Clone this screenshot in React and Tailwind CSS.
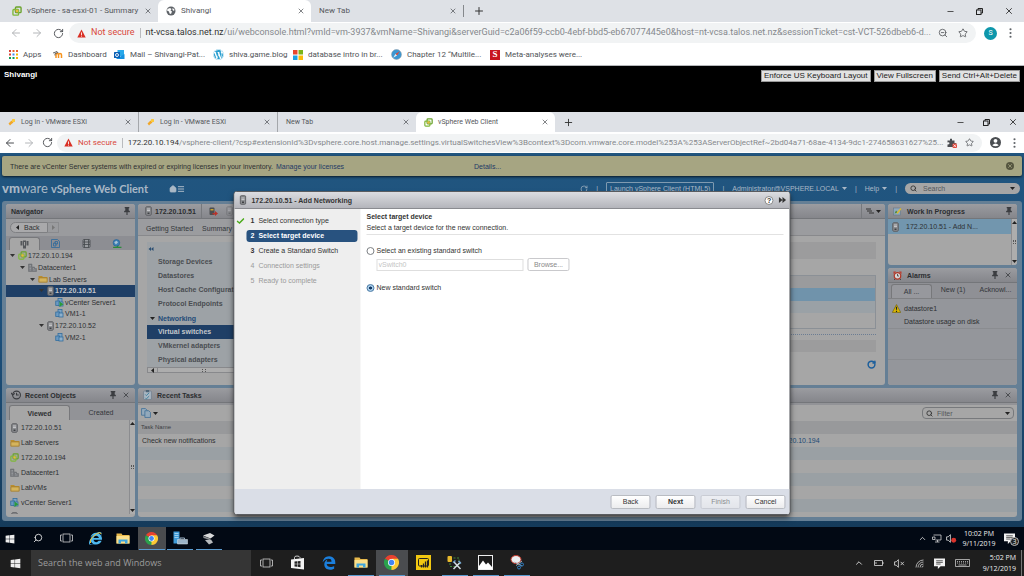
import { FaWindows, FaWordpress, FaEdgeLegacy, FaInternetExplorer } from "react-icons/fa6";
import {
  ArrowLeft,
  ArrowRight,
  ChevronUp,
  House,
  Menu,
  Minus,
  Plus,
  RotateCw,
  Search,
  Star,
  X,
  ZoomOut,
} from "lucide-react";

const chromeFont = "font-['Roboto','Segoe_UI',sans-serif]";
const taskbarFont = "font-['Open_Sans','Segoe_UI',sans-serif]";
const clientFont = "font-['Liberation_Sans',Arial,sans-serif]";

/* ---------- icons ---------- */

const VSphereIcon = ({ className = "size-[9px]" }) => (
  <svg viewBox="0 0 16 16" className={className} fill="none">
    <rect x="5.5" y="1.5" width="9" height="9" rx="1.5" stroke="#6aa22c" strokeWidth="2.2" />
    <rect x="1.5" y="5.5" width="9" height="9" rx="1.5" stroke="#7fb83a" strokeWidth="2.2" />
    <rect x="6" y="6" width="4" height="4" fill="#e9b93a" />
  </svg>
);

const HostIcon = ({ className = "h-[10px] w-[7px]" }) => (
  <svg viewBox="0 0 14 20" className={className}>
    <rect x="1.5" y="1.5" width="11" height="17" rx="2" fill="#8d8f92" stroke="#5c5e62" strokeWidth="2" />
    <path d="M4 6h6M4 9h6" stroke="#d5d6d8" strokeWidth="1.5" />
    <rect x="5" y="13" width="4" height="3" fill="#3f4144" />
  </svg>
);

const FolderIcon = ({ className = "h-[8px] w-[10px]" }) => (
  <svg viewBox="0 0 20 16" className={className}>
    <path d="M1 2h7l2 2h9v11H1z" fill="#b98d2f" />
    <path d="M2 6h16v8H2z" fill="#d5b45c" stroke="#94702a" />
  </svg>
);

const DatacenterIcon = ({ className = "size-[9px]" }) => (
  <svg viewBox="0 0 18 18" className={className}>
    <path d="M1 17V2h7v6h5v3h4v6z" fill="#77797d" stroke="#66686c" />
    <path d="M3 5h3M3 8h3M3 11h3M10 11h2M10 14h5M3 14h3" stroke="#b3b5b8" />
  </svg>
);

const VmIcon = ({ running }) => (
  <svg viewBox="0 0 18 18" className="size-[9px] shrink-0">
    <rect x="6" y="1" width="8" height="8" fill="#7ea4c4" stroke="#2d6a9c" strokeWidth="1.5" />
    <rect x="1.5" y="6" width="8" height="9" fill="#6b9ac2" stroke="#2d6a9c" strokeWidth="1.5" />
    <rect x="8" y="8" width="8" height="8" fill="#8fb0cb" stroke="#2d6a9c" strokeWidth="1.5" />
    {running && <path d="M9 7l8 5.500-8 5.500z" fill="#2b9a3b" />}
  </svg>
);

const PinIcon = () => (
  <svg viewBox="0 0 10 14" className="h-[8px] w-[6px]" fill="#3b3d41">
    <path d="M1 0h8v2H8v4l2 1v2H6v5H4V9H0V7l2-1V2H1z" />
  </svg>
);

const KeyIcon = () => (
  <svg viewBox="0 0 16 16" className="size-2">
    <path d="M1 11l6-6 4 4-4 3-3 3z" fill="#f0a629" />
    <rect x="8" y="2" width="6" height="6" rx="1" fill="#fbc93c" />
  </svg>
);

const WarningIcon = ({ className = "size-[9px]" }) => (
  <svg viewBox="0 0 16 16" className={className}>
    <path d="M8 1l7.5 14H.5z" fill="#d93025" />
    <path d="M8 6v5M8 12v1.5" stroke="#fff" strokeWidth="1.5" />
  </svg>
);

const ChromeIcon = ({ className = "size-[13px]" }) => (
  <svg viewBox="0 0 24 24" className={className}>
    <path d="M12 12L1.6 6A12 12 0 0 1 22.4 6z" fill="#e8412f" />
    <path d="M12 12L1.6 6A12 12 0 0 0 12 24l5.2-9z" fill="#2ba24c" />
    <path d="M12 12l-.1 12A12 12 0 0 0 22.4 6H12z" fill="#fcc934" />
    <circle cx="12" cy="12" r="5.6" fill="#fff" />
    <circle cx="12" cy="12" r="4.4" fill="#4285f4" />
  </svg>
);

const ExplorerIcon = ({ className = "h-[11px] w-[14px]" }) => (
  <svg viewBox="0 0 28 22" className={className}>
    <path d="M1 1h10l2 3h14v17H1z" fill="#e8b94c" />
    <path d="M1 6h26v15H1z" fill="#fbe08c" />
    <path d="M5 21v-8h18v8h-5v-4h-8v4z" fill="#3fa6de" />
  </svg>
);

const TaskViewIcon = ({ className = "h-[10px] w-[13px]" }) => (
  <svg viewBox="0 0 26 20" className={className} fill="none" stroke="#d0d0d0" strokeWidth="1.6">
    <rect x="6" y="2" width="14" height="16" />
    <path d="M4 4H1v12h3M22 4h3v12h-3" />
  </svg>
);

const RestoreIcon = () => (
  <svg viewBox="0 0 14 14" className="size-[7px]" fill="none" stroke="#222" strokeWidth="2">
    <rect x="1" y="4" width="9" height="9" />
    <path d="M4 4V1h9v9h-3" />
  </svg>
);

const Caret = ({ className = "text-[#222]" }) => (
  <svg viewBox="0 0 10 6" className={`h-[3px] w-[5px] shrink-0 ${className}`} fill="currentColor">
    <path d="M0 0h10L5 6z" />
  </svg>
);

const Kebab = () => (
  <svg viewBox="0 0 4 16" className="h-[10px] w-[3px]" fill="#5f6368">
    <circle cx="2" cy="2" r="1.7" />
    <circle cx="2" cy="8" r="1.7" />
    <circle cx="2" cy="14" r="1.7" />
  </svg>
);

const GlobeIcon = () => (
  <svg viewBox="0 0 20 20" className="size-[10px]">
    <circle cx="10" cy="10" r="9" fill="#5f6368" />
    <path d="M3 6l5-2 3 2-2 3 3 2-2 5-3-1-1-4-4-2zM13 4l4 3-1 3-3-2z" fill="#fff" />
  </svg>
);

const MoodleIcon = () => (
  <svg viewBox="0 0 20 14" className="h-[7px] w-[10px]" fill="none" strokeWidth="3">
    <path d="M6 14V8q0-3 2.500-3T11 8v6M11 8q0-3 3-3t3 3v6" stroke="#f7931e" />
    <path d="M0 4l8-3 2 2-6 2v4" stroke="#444" strokeWidth="1.6" />
  </svg>
);

const OutlookIcon = () => (
  <svg viewBox="0 0 22 20" className="size-[11px]">
    <rect x="7" y="1" width="13" height="12" fill="#28a8ea" />
    <path d="M5 9l8 5 8-5v10H5z" fill="#1490df" />
    <rect x="0" y="5" width="12" height="12" rx="1" fill="#0a5fb4" />
    <circle cx="6" cy="11" r="3" fill="none" stroke="#fff" strokeWidth="1.8" />
  </svg>
);

const MicrosoftIcon = () => (
  <svg viewBox="0 0 20 20" className="size-[10px]">
    <path d="M0 0h9v9H0z" fill="#e8472b" />
    <path d="M11 0h9v9h-9z" fill="#7cb518" />
    <path d="M0 11h9v9H0z" fill="#1ba1e2" />
    <path d="M11 11h9v9h-9z" fill="#fbbc0a" />
  </svg>
);

const SafariIcon = () => (
  <svg viewBox="0 0 20 20" className="size-[11px]">
    <circle cx="10" cy="10" r="9" fill="#3b97d3" stroke="#8f9aa3" />
    <path d="M16 4l-5 8-3-3z" fill="#e04836" />
    <path d="M4 16l4-7 3 3z" fill="#e8eef3" />
  </svg>
);

const AppsIcon = () => (
  <svg viewBox="0 0 18 18" className="size-[9px]">
    <path d="M0 0h4v4H0zM0 7h4v4H0z" fill="#db4437" />
    <path d="M7 0h4v4H7zM14 0h4v4h-4z" fill="#e8622c" />
    <path d="M7 7h4v4H7z" fill="#4285f4" />
    <path d="M14 7h4v4h-4zM14 14h4v4h-4z" fill="#f4b400" />
    <path d="M0 14h4v4H0zM7 14h4v4H7z" fill="#0f9d58" />
  </svg>
);

const IeIcon = () => (
  <span className="relative">
    <FaInternetExplorer className="size-[13px] text-[#4db8ef]" />
    <svg viewBox="0 0 26 26" className="absolute inset-0 size-[13px]" fill="none" stroke="#f2c230" strokeWidth="2">
      <path d="M3 22Q1 14 12 6T24 4" />
    </svg>
  </span>
);

/* ---------- browser chrome ---------- */

const Tab = ({ icon, label, active, width, divider }) => (
  <div
    className={`flex items-center gap-[5px] pl-[8px] pr-[6px] text-[#55585c] ${width} ${
      active ? "rounded-t-md bg-white" : ""
    } ${divider ? "border-r border-[#a4a7ab]" : ""}`}
  >
    {icon}
    <span className="flex-1 whitespace-nowrap">{label}</span>
    <button aria-label={`Close ${label}`}>
      <X className="size-[8px] text-[#44474b]" />
    </button>
  </div>
);

const WindowButtons = ({ className }) => (
  <div className={`ml-auto flex items-center ${className}`}>
    <button aria-label="Minimize"><Minus className="size-[9px] text-[#222]" /></button>
    <button aria-label="Restore"><RestoreIcon /></button>
    <button aria-label="Close"><X className="size-[10px] text-[#222]" /></button>
  </div>
);

const AddressBar = ({ host, path, className, navClass, pillClass, backColor, tools, avatar }) => (
  <div className={`flex items-center bg-white ${className}`}>
    <div className={`flex shrink-0 items-center justify-around ${navClass}`}>
      <button aria-label="Go back"><ArrowLeft className={`size-[12px] ${backColor}`} /></button>
      <button aria-label="Go forward"><ArrowRight className="size-[12px] text-[#b4b6b9]" /></button>
      <button aria-label="Reload"><RotateCw className="size-[11px] text-[#4a4d51]" /></button>
    </div>
    <div className={`flex min-w-0 flex-1 items-center gap-[5px] rounded-full bg-[#f1f3f4] pr-2 ${pillClass}`}>
      <WarningIcon />
      <span className="shrink-0 text-[#d9483c]">Not secure</span>
      <span className="h-[10px] w-px shrink-0 bg-[#b9bbbe]" />
      <span className="min-w-0 flex-1 whitespace-nowrap text-[#85888c]">
        <span className="text-[#333]">{host}</span>
        {path}
      </span>
      {tools}
    </div>
    <div className="ml-2 flex items-center gap-[12px]">
      {avatar}
      <Kebab />
    </div>
  </div>
);

const bookmarks = [
  { label: "Apps", icon: <AppsIcon />, width: "w-[44px]" },
  { label: "Dashboard", icon: <MoodleIcon />, width: "w-[61px]" },
  { label: "Mail – Shivangi-Pat...", icon: <OutlookIcon />, width: "w-[99px]" },
  { label: "shiva.game.blog", icon: <FaWordpress className="size-[11px] text-[#2a9fd0]" />, width: "w-[80px]" },
  { label: "database intro in br...", icon: <MicrosoftIcon />, width: "w-[98px]" },
  { label: "Chapter 12 “Multile...", icon: <SafariIcon />, width: "w-[99px]" },
  {
    label: "Meta-analyses were...",
    icon: (
      <span className="flex size-[10px] items-center justify-center bg-[#c8141e] font-['Liberation_Serif',serif] text-[9px] font-bold text-white">
        S
      </span>
    ),
    width: "w-[110px]",
  },
];

const Bookmarks = () => (
  <nav className="flex h-[22px] items-center border-b border-[#b5b7ba] bg-white pl-[9px] text-[8px] text-[#505357]">
    {bookmarks.map((b) => (
      <a key={b.label} href="#" className={`flex items-center gap-[5px] whitespace-nowrap ${b.width}`}>
        {b.icon}
        <span>{b.label}</span>
      </a>
    ))}
  </nav>
);

/* ---------- vSphere client ---------- */

const Panel = ({ icon, title, closable, className = "", children }) => (
  <section className={`flex min-h-0 min-w-0 flex-col overflow-hidden rounded-[3px] bg-[#a6a6a6] ${className}`}>
    <header className="flex h-[15px] shrink-0 items-center gap-1 border-b border-[#74767a] bg-linear-to-b from-[#9b9ca0] to-[#85868b] px-[5px] text-[#2b2d30]">
      {icon}
      <h2 className="flex-1 font-bold">{title}</h2>
      <button aria-label={`Pin ${title}`}><PinIcon /></button>
      {closable && (
        <button aria-label={`Close ${title}`}><X className="ml-[2px] size-[8px]" /></button>
      )}
    </header>
    {children}
  </section>
);

const Scrollbar = () => (
  <div className="flex w-[6px] shrink-0 flex-col items-center justify-between border-l border-[#8b8c8f] bg-[#adadad] py-[2px]">
    <Caret className="rotate-180 text-[#222]" />
    <span className="h-[4px] w-[3px] border-x border-dotted border-[#555]" />
    <Caret className="text-[#222]" />
  </div>
);

const tree = [
  { label: "172.20.10.194", icon: <VSphereIcon />, pad: "pl-[4px]", open: true },
  { label: "Datacenter1", icon: <DatacenterIcon />, pad: "pl-[14px]", open: true },
  { label: "Lab Servers", icon: <FolderIcon />, pad: "pl-[24px]", open: true },
  { label: "172.20.10.51", icon: <HostIcon />, pad: "pl-[33px]", open: true, selected: true },
  { label: "vCenter Server1", icon: <VmIcon running />, pad: "pl-[49px]" },
  { label: "VM1-1", icon: <VmIcon />, pad: "pl-[49px]" },
  { label: "172.20.10.52", icon: <HostIcon />, pad: "pl-[33px]", open: true },
  { label: "VM2-1", icon: <VmIcon />, pad: "pl-[49px]" },
];

const Navigator = () => (
  <Panel title="Navigator">
    <div className="flex h-[17px] shrink-0 items-center bg-[#9a9b9e] pl-[4px]">
      <button className="flex h-[11px] w-[38px] items-center gap-1 rounded-l-full border border-[#7f8083] bg-[#a9a9ab] pl-[4px]">
        <Caret className="rotate-90 text-[#222]" />
        Back
      </button>
      <button aria-label="Forward" className="flex h-[11px] w-[11px] items-center justify-center border border-l-0 border-[#8a8b8e]">
        <Caret className="-rotate-90 text-[#777]" />
      </button>
    </div>
    <div className="flex h-[14px] shrink-0 items-end bg-[#8d8e93] px-[3px]">
      <button aria-label="Hosts" className="flex h-[13px] w-[31px] items-center justify-center rounded-t-[3px] border border-b-0 border-[#77787b] bg-[#a6a6a6]">
        <svg viewBox="0 0 18 18" className="size-[9px]" fill="#54575b">
          <path d="M1 2h4v9H1zM13 2h4v9h-4zM6 1h6v16H6z" />
          <path d="M8 4h2v7H8z" fill="#a6a6a6" />
        </svg>
      </button>
      <button aria-label="VMs" className="flex h-[13px] flex-1 items-center justify-center">
        <svg viewBox="0 0 18 18" className="size-[9px]" fill="none" stroke="#2d6a9c" strokeWidth="1.6">
          <path d="M1 1h12l4 4v12H1z" />
          <path d="M8 5h5v5H8zM5 8h5v6H5z" />
        </svg>
      </button>
      <button aria-label="Storage" className="flex h-[13px] flex-1 items-center justify-center">
        <svg viewBox="0 0 18 18" className="size-[9px]" fill="#9a9ca0" stroke="#44474b" strokeWidth="1.6">
          <rect x="2" y="1" width="14" height="16" rx="2" />
          <path d="M2 6h14M2 11h14M5 1v16M13 1v16" />
        </svg>
      </button>
      <button aria-label="Networking" className="flex h-[13px] flex-1 items-center justify-center">
        <svg viewBox="0 0 18 18" className="size-[10px]">
          <circle cx="8" cy="7" r="6" fill="#3d7fb5" stroke="#1f5d92" />
          <path d="M4 6l4-3 3 3-4 4z" fill="#a8c3d6" />
          <path d="M2 15h15M10 12v4" stroke="#2b8a3b" strokeWidth="2.500" />
        </svg>
      </button>
    </div>
    <ul className="grid h-[93px] shrink-0 grid-rows-8">
      {tree.map((n) => (
        <li
          key={n.label}
          className={`flex items-center gap-[1px] overflow-hidden ${n.pad} ${
            n.selected ? "bg-[#1f3f66] font-bold text-[#c3c7cc]" : ""
          }`}
        >
          {n.open && <Caret className="mr-[2px] text-[#333]" />}
          {n.icon}
          <span>{n.label}</span>
        </li>
      ))}
    </ul>
  </Panel>
);

const recent = [
  { label: "172.20.10.51", icon: <HostIcon /> },
  { label: "Lab Servers", icon: <FolderIcon /> },
  { label: "172.20.10.194", icon: <VSphereIcon /> },
  { label: "Datacenter1", icon: <DatacenterIcon /> },
  { label: "LabVMs", icon: <FolderIcon /> },
  { label: "vCenter Server1", icon: <VmIcon running /> },
];

const RecentObjects = () => (
  <Panel
    title="Recent Objects"
    closable
    className="w-[129px]"
    icon={
      <svg viewBox="0 0 18 18" className="size-[10px]" fill="none" stroke="#3b3d41" strokeWidth="2">
        <circle cx="10" cy="9" r="7" />
        <path d="M10 5v4h4M0 5l3 4 4-3" />
      </svg>
    }
  >
    <div className="flex h-[17px] shrink-0 items-end bg-[#929397] px-[3px]">
      <button className="h-[15px] w-[61px] rounded-t-[3px] border border-b-0 border-[#77787b] bg-[#a6a6a6] font-bold">
        Viewed
      </button>
      <button className="h-[15px] flex-1 text-[#33363a]">Created</button>
    </div>
    <div className="flex min-h-0 flex-1 pb-[3px]">
      <ul className="flex-1 overflow-hidden">
        {recent.map((r) => (
          <li key={r.label} className="flex h-[15px] items-center gap-[1px] pl-[3px]">
            <span className="flex w-[11px] justify-center">{r.icon}</span>
            <span>{r.label}</span>
          </li>
        ))}
        <li className="flex h-[15px] pl-[5px] pt-[2px]"><HostIcon /></li>
      </ul>
      <Scrollbar />
    </div>
  </Panel>
);

const menu = ["Storage Devices", "Datastores", "Host Cache Configuration", "Protocol Endpoints"];
const netMenu = ["Virtual switches", "VMkernel adapters", "Physical adapters"];

const HostView = () => (
  <section className="flex min-w-0 flex-col overflow-hidden rounded-[3px] bg-[#a6a6a6]">
    <header className="flex h-[15px] shrink-0 items-center border-b border-[#74767a] bg-linear-to-b from-[#9b9ca0] to-[#85868b] pl-[7px]">
      <HostIcon />
      <h2 className="ml-[3px] w-[46px] font-bold text-[#2b2d30]">172.20.10.51</h2>
      <div className="flex h-full items-center gap-[8px] border-l border-[#77797d] pl-[7px]">
        <svg viewBox="0 0 18 18" className="size-[9px]">
          <rect x="1" y="1" width="10" height="15" rx="2" fill="#4c4e52" />
          <path d="M3 4h6v3H3z" fill="#c9a22c" />
          <path d="M7 12h5V8l6 5-6 5v-3H7z" fill="#b8322a" />
        </svg>
        <HostIcon className="h-[10px] w-[7px] opacity-40" />
      </div>
      <button aria-label="Actions" className="ml-auto flex h-full items-center gap-[2px] border-l border-[#77797d] px-[4px]">
        <svg viewBox="0 0 16 12" className="h-[6px] w-[8px]" stroke="#333" strokeWidth="2">
          <path d="M0 2h10M2 6h10M6 10h10" />
        </svg>
        <Caret />
      </button>
    </header>
    <nav className="flex h-[17px] shrink-0 items-center gap-[9px] border-b border-[#88898c] bg-[#9b9c9f] pl-[8px] pt-[3px] text-[#33363a]">
      <a href="#">Getting Started</a>
      <a href="#">Summary</a>
      <a href="#">Monitor</a>
    </nav>
    <div className="flex min-h-0 flex-1 gap-[8px] pl-[9px] pr-[9px] pt-[6px]">
      <aside className="w-[112px] shrink-0 font-bold text-[#4a4d51]">
        <div className="bg-[#9da2a6]">
          <div className="flex h-[13px] items-center pl-[1px] text-[#2c4f73]">
            <svg viewBox="0 0 10 8" className="h-[4px] w-[6px]" fill="currentColor">
              <path d="M5 0v8L0 4zM10 0v8L5 4z" />
            </svg>
          </div>
          <ul>
            {menu.map((m) => (
              <li key={m} className="h-[14px] whitespace-nowrap pl-[11px] leading-[14px]">{m}</li>
            ))}
            <li className="flex h-[14px] items-center gap-[3px] pl-[3px] text-[#1f4b78]">
              <Caret />
              Networking
            </li>
            {netMenu.map((m, i) => (
              <li
                key={m}
                className={`h-[14px] pl-[11px] leading-[14px] ${i === 0 ? "bg-[#1f3f66] text-[#c3c7cc]" : ""}`}
              >
                {m}
              </li>
            ))}
          </ul>
        </div>
        <div className="flex h-[6px] items-center border border-[#88898c] bg-[#adadad]">
          <span className="flex h-full w-[10px] items-center justify-center border-r border-[#88898c]">
            <Caret className="rotate-90 text-[#222]" />
          </span>
          <span className="ml-[44px] h-[3px] w-[4px] border-x border-dotted border-[#555]" />
        </div>
      </aside>
      <div className="flex-1">
        <div className="h-[17px] bg-[#9c9c9d]" />
        <div className="mt-[16px] border border-[#8b9096]">
          <div className="h-[12px] bg-[#9a9b9d]" />
          <div className="h-[13px] bg-[#7093ab]" />
          <div className="h-[12px] bg-[#9aa1a6]" />
          <div className="h-[15px]" />
        </div>
        <div className="mt-[5px] border-t border-dotted border-[#6c7d93]" />
        <div className="mt-[5px] h-[12px] bg-[#9c9c9d]" />
        <button aria-label="Refresh" className="mt-[8px] ml-auto block">
          <RotateCw className="size-[9px] text-[#1d5f9c]" strokeWidth={4} />
        </button>
      </div>
    </div>
  </section>
);

const WorkInProgress = () => (
  <Panel
    title="Work In Progress"
    className="h-[61px] shrink-0"
    icon={
      <svg viewBox="0 0 18 18" className="mr-[1px] size-[9px]">
        <rect x="1" y="2" width="14" height="14" fill="#8fa9bd" stroke="#5f7182" />
        <path d="M3 13l3-6 4 4z" fill="#4f8a3c" />
        <path d="M7 12L15 2l2 2-8 10z" fill="#e0bb2e" />
      </svg>
    }
  >
    <div className="flex min-h-0 flex-1">
      <ul className="flex-1">
        <li className="flex h-[15px] items-center gap-[7px] bg-[#7296ae] pl-[4px]">
          <HostIcon />
          172.20.10.51 - Add N...
        </li>
      </ul>
      <Scrollbar />
    </div>
  </Panel>
);

const Alarms = () => (
  <Panel
    title="Alarms"
    closable
    className="flex-1"
    icon={
      <svg viewBox="0 0 18 18" className="mr-[1px] size-[9px]">
        <path d="M1 1h5L1 6zM17 1h-5l5 5z" fill="#c0392b" />
        <circle cx="9" cy="9.500" r="6.500" fill="#d8d8d8" stroke="#b03a2a" strokeWidth="2.500" />
        <path d="M9 6v4h3M4 16l-2 2M14 16l2 2" stroke="#333" strokeWidth="1.500" fill="none" />
      </svg>
    }
  >
    <div className="flex h-[16px] shrink-0 items-end border-b border-[#808184] bg-[#8f9095] pl-[3px] text-[#33363a]">
      <button className="h-[14px] w-[41px] rounded-t-[3px] border border-b-0 border-[#77787b] bg-[#97989d]">All ...</button>
      <button className="h-[16px] w-[42px] pb-[2px]">New (1)</button>
      <button className="h-[16px] flex-1 pb-[2px]">Acknowl...</button>
    </div>
    <div className="flex-1 bg-[#94969b]">
      <div className="h-[30px] border-b border-[#8a8c90] pl-[4px] pt-[4px]">
        <p className="flex h-[11px] items-center gap-[3px]">
          <svg viewBox="0 0 16 16" className="size-[9px]">
            <path d="M8 1l7.500 14H.5z" fill="#d9b500" stroke="#665500" />
            <path d="M8 5v5M8 12v2" stroke="#222" strokeWidth="2" />
          </svg>
          datastore1
        </p>
        <p className="pl-[12px] pt-[3px]">Datastore usage on disk</p>
      </div>
      <div className="h-[31px] border-b border-[#8a8c90]" />
    </div>
  </Panel>
);

const RecentTasks = () => (
  <Panel
    title="Recent Tasks"
    closable
    className="flex-1"
    icon={
      <svg viewBox="0 0 16 18" className="mr-[1px] h-[10px] w-[9px]">
        <rect x="1" y="2" width="14" height="15" rx="1" fill="#a9b6c1" stroke="#5f7182" />
        <rect x="5" y="0" width="6" height="4" fill="#4f6577" />
        <path d="M4 8l2 2 5-5M4 14l2 2 5-5" stroke="#2d7a9c" strokeWidth="1.500" fill="none" />
      </svg>
    }
  >
    <div className="flex h-[18px] shrink-0 items-center justify-between border-t-2 border-[#929397] pl-[3px] pr-[3px]">
      <button aria-label="Copy" className="flex items-center gap-[2px]">
        <svg viewBox="0 0 18 18" className="size-[10px]" fill="#93a9bb" stroke="#3f6f97" strokeWidth="1.400">
          <path d="M1 1h7l3 3v9H1z" />
          <path d="M7 5h7l3 3v9H7z" />
        </svg>
        <Caret />
      </button>
      <label className="flex h-[12px] w-[92px] items-center gap-[4px] rounded-[4px] border border-[#77797c] px-[3px]">
        <Search className="size-[7px] text-[#333]" strokeWidth={3} />
        <input aria-label="Filter" placeholder="Filter" className="min-w-0 flex-1 bg-transparent outline-none placeholder:text-[#55585c]" />
        <Caret />
      </label>
    </div>
    <table className="w-full table-fixed text-left">
      <thead>
        <tr className="h-[13px] bg-[#98999b] text-[6px] text-[#3d4043]">
          <th className="w-[72%] pl-[3px] font-normal">Task Name</th>
          <th className="font-normal" />
        </tr>
      </thead>
      <tbody>
        <tr className="h-[13px]">
          <td className="pl-[4px]">Check new notifications</td>
          <td className="pl-[4px]"><a href="#" className="text-[#1d4a75]">172.20.10.194</a></td>
        </tr>
        {[0, 1, 2, 3, 4].map((i) => (
          <tr key={i} className={`h-[13px] ${i % 2 === 0 ? "bg-[#9aa0a4]" : ""}`}>
            <td />
            <td />
          </tr>
        ))}
      </tbody>
    </table>
  </Panel>
);

const dialogButton =
  "h-[14px] rounded-[2px] border border-[#b9bcc2] bg-linear-to-b from-white to-[#ececee] text-[#333]";
const radio =
  "size-[8px] appearance-none rounded-full border border-[#7d8084] bg-white checked:border-[#4a7ba6] checked:bg-[radial-gradient(circle,#143a63_30%,#a9cdea_40%)]";

const steps = ["Select connection type", "Select target device", "Create a Standard Switch", "Connection settings", "Ready to complete"];

const AddNetworkingDialog = () => (
  <div
    role="dialog"
    aria-label="Add Networking"
    className="absolute top-[38px] bottom-[12px] left-1/2 flex w-[54.4%] -translate-x-1/2 flex-col overflow-hidden rounded-[3px] border border-[#5a5c60] bg-white shadow-md shadow-black/50"
  >
    <header className="flex h-[17px] shrink-0 items-center gap-[5px] border-b border-[#8a8b90] bg-linear-to-b from-[#dcdde1] to-[#b4b5bb] pl-[5px] pr-[3px]">
      <HostIcon />
      <h1 className="flex-1 font-bold text-[#333]">172.20.10.51 - Add Networking</h1>
      <button aria-label="Help" className="flex size-[9px] items-center justify-center rounded-full border border-[#888] bg-white text-[7px] font-bold text-[#333]">
        ?
      </button>
      <button aria-label="Expand">
        <svg viewBox="0 0 12 10" className="h-[6px] w-[8px]" fill="#333">
          <path d="M0 0l6 5-6 5zM6 0l6 5-6 5z" />
        </svg>
      </button>
    </header>
    <div className="flex min-h-0 flex-1">
      <ol className="w-[126px] shrink-0 bg-[#eeeeee] pt-[4px] pr-[3px]">
        {steps.map((s, i) => (
          <li key={s} className="flex h-[15px] items-center">
            <span className="w-[12px] pl-[2px]">
              {i === 0 && (
                <svg viewBox="0 0 16 12" className="h-[6px] w-[8px]" fill="none" stroke="#4cab1d" strokeWidth="3">
                  <path d="M1 6l5 4 9-9" />
                </svg>
              )}
            </span>
            <span
              className={`flex h-[12px] flex-1 items-center gap-[4px] rounded-[3px] pl-[4px] ${
                i === 1 ? "bg-[#28527f] text-white" : i > 2 ? "text-[#9a9a9a]" : "text-[#333]"
              }`}
            >
              <span className={i < 3 ? "font-bold" : ""}>{i + 1}</span>
              <span className={i === 1 ? "font-bold" : ""}>{s}</span>
            </span>
          </li>
        ))}
      </ol>
      <div className="flex-1 px-[6px] pt-[3px] text-[#333]">
        <h2 className="h-[10px] font-bold leading-[10px]">Select target device</h2>
        <p className="h-[13px] border-b border-[#e2e2e2] leading-[11px]">Select a target device for the new connection.</p>
        <label className="mt-[11px] flex h-[9px] items-center gap-[2px]">
          <input type="radio" name="target" className={radio} />
          Select an existing standard switch
        </label>
        <div className="mt-[3px] flex items-center gap-[4px] pl-[10px]">
          <input
            aria-label="Existing switch"
            disabled
            defaultValue="vSwitch0"
            className="h-[12px] w-[147px] border border-[#dedede] pl-[1px] text-[#c4c4c4]"
          />
          <button disabled className="h-[13px] w-[42px] rounded-[2px] border border-[#c9c9cc] text-[#8a8a8a]">Browse...</button>
        </div>
        <label className="mt-[12px] flex h-[9px] items-center gap-[2px]">
          <input type="radio" name="target" defaultChecked className={radio} />
          New standard switch
        </label>
      </div>
    </div>
    <footer className="flex h-[25px] shrink-0 items-center justify-end gap-[5px] bg-[#dadee7] pr-[4px]">
      <button className={`w-[40px] ${dialogButton}`}>Back</button>
      <button className={`w-[40px] font-bold ${dialogButton}`}>Next</button>
      <button disabled className={`w-[40px] opacity-50 ${dialogButton}`}>Finish</button>
      <button className={`w-[40px] ${dialogButton}`}>Cancel</button>
    </footer>
  </div>
);

const VSphereClient = () => (
  <main
    className={`relative flex flex-1 flex-col bg-linear-to-b from-[#215680] via-[#1d4f7a] to-[#153b5b] px-[2px] pt-[3px] pb-[6px] text-[7px] leading-[9px] text-[#2e3033] ${clientFont}`}
  >
    <div className="flex h-[20px] shrink-0 items-center rounded-[2px] bg-[#a6a582] px-[8px] shadow-sm shadow-black/60">
      <span className="w-[266px]">There are vCenter Server systems with expired or expiring licenses in your inventory.</span>
      <a href="#" className="w-[198px] text-[#243a66]">Manage your licenses</a>
      <a href="#" className="text-[#243a66]">Details...</a>
      <button aria-label="Dismiss" className="ml-auto flex size-[8px] items-center justify-center rounded-full bg-[#55553f]">
        <X className="size-[6px] text-[#a6a582]" strokeWidth={3} />
      </button>
    </div>
    <div className="flex h-[25px] shrink-0 items-center text-[#a9b8c6]">
      <span className="w-[49px] font-['Lato',sans-serif] text-[13px]">
        <b className="font-black">vm</b>ware
      </span>
      <span className="w-[118px] font-['Lato',sans-serif] text-[11px] font-bold">vSphere Web Client</span>
      <House className="size-[8px]" fill="currentColor" />
      <Menu className="size-[8px]" strokeWidth={3} />
      <div className="ml-auto flex items-center gap-[8px] pr-[2px]">
        <RotateCw className="size-[8px]" />
        <span>|</span>
        <a href="#" className="flex h-[13px] items-center rounded-[1px] border border-[#7f9ab0] px-[3px]">Launch vSphere Client (HTML5)</a>
        <span>|</span>
        <button className="flex items-center gap-[3px]">
          Administrator@VSPHERE.LOCAL <Caret className="text-[#a9b8c6]" />
        </button>
        <span>|</span>
        <button className="flex items-center gap-[3px]">
          Help <Caret className="text-[#a9b8c6]" />
        </button>
        <span>|</span>
        <label className="flex h-[11px] w-[115px] items-center gap-[6px] rounded-full bg-[#a6a6a6] px-[5px]">
          <Search className="size-[7px] text-[#333]" strokeWidth={3} />
          <input aria-label="Search" placeholder="Search" className="min-w-0 flex-1 bg-transparent outline-none placeholder:text-[#55585c]" />
          <Caret />
        </label>
      </div>
    </div>
    <div className="flex flex-1 flex-col gap-[3px] rounded-[3px] bg-[#657f95] pt-[3px] pr-[5px] pb-[4px] pl-[4px]">
      <div className="grid min-h-0 flex-1 grid-cols-[129px_1fr_129px] gap-[3px]">
        <Navigator />
        <HostView />
        <div className="flex flex-col gap-[3px]">
          <WorkInProgress />
          <Alarms />
        </div>
      </div>
      <div className="flex h-[129px] shrink-0 gap-[3px]">
        <RecentObjects />
        <RecentTasks />
      </div>
    </div>
    <AddNetworkingDialog />
  </main>
);

/* ---------- taskbars ---------- */

const TaskButton = ({ label, running, active, children }) => (
  <button
    aria-label={label}
    className={`flex flex-1 items-center justify-center ${active ? "bg-[#4a4c4f]" : ""}`}
  >
    <span
      className={`flex h-full w-[26px] items-center justify-center border-b ${
        running ? "border-[#5a9bd0]" : "border-transparent"
      }`}
    >
      {children}
    </span>
  </button>
);

const SoundIcon = ({ muted }) => (
  <svg viewBox="0 0 20 16" className="h-[9px] w-[11px]" fill="none" stroke="#ddd" strokeWidth="1.500">
    <path d="M1 5h3l4-4v14l-4-4H1z" />
    {muted ? <circle cx="14" cy="11" r="4.500" fill="#d9332b" stroke="none" /> : <path d="M12 5l6 6M18 5l-6 6" />}
  </svg>
);

const NoteIcon = () => (
  <svg viewBox="0 0 20 20" className="size-[11px]">
    <path d="M0 1h20v14h-8l-5 5v-5H0z" fill="#f2f2f2" />
    <path d="M4 5h12M4 8h12M4 11h8" stroke="#333" strokeWidth="1.400" />
  </svg>
);

const RemoteTaskbar = () => (
  <div className={`flex h-[23px] shrink-0 bg-[#020914] text-[7px] text-[#eee] ${taskbarFont}`}>
    <button aria-label="Start" className="flex w-[24px] items-center pl-[5px]">
      <FaWindows className="size-[10px]" />
    </button>
    <div className="flex w-[199px]">
      <TaskButton label="Search"><Search className="size-[10px] -scale-x-100" /></TaskButton>
      <TaskButton label="Task View"><TaskViewIcon /></TaskButton>
      <TaskButton label="Internet Explorer"><IeIcon /></TaskButton>
      <TaskButton label="File Explorer"><ExplorerIcon /></TaskButton>
      <TaskButton label="Chrome" running active><ChromeIcon /></TaskButton>
      <TaskButton label="Server Manager" running>
        <svg viewBox="0 0 30 28" className="h-[14px] w-[15px]">
          <path d="M1 1h12v24H1z" fill="#3f9bd8" />
          <path d="M3 5h8M3 9h8M3 13h8" stroke="#bfe0f5" strokeWidth="1.500" />
          <path d="M9 17h20v9H9z" fill="#9cb4c8" stroke="#dfe8ef" />
          <path d="M14 17v-3h9v3" stroke="#9cb4c8" strokeWidth="2" fill="none" />
        </svg>
      </TaskButton>
      <TaskButton label="Hardware" running>
        <svg viewBox="0 0 26 24" className="size-[13px]">
          <path d="M2 6l14-5 9 5-8 6z" fill="#d9dadb" />
          <path d="M2 7l14 5v3L3 11z" fill="#8d9093" />
          <path d="M6 15l12-1 4 6-8 4z" fill="#b7babd" />
        </svg>
      </TaskButton>
    </div>
    <div className="ml-auto flex items-center gap-[4px] pr-[9px]">
      <ChevronUp className="size-[9px]" />
      <svg viewBox="0 0 20 18" className="h-[9px] w-[11px]" fill="none" stroke="#ddd" strokeWidth="1.500">
        <path d="M4 2h15v10H8M2 6h5v5H2zM7 16h9M12 12v4" />
      </svg>
      <SoundIcon muted />
      <time className="w-[36px] text-center leading-[10px]">10:02 PM<br />9/11/2019</time>
      <span className="relative ml-[3px]">
        <NoteIcon />
        <span className="absolute -right-[4px] -bottom-[2px] flex size-[9px] items-center justify-center rounded-full border border-[#bbb] bg-[#222] text-[7px] leading-none">3</span>
      </span>
    </div>
  </div>
);

const HostTaskbar = () => (
  <div className={`flex h-[26px] shrink-0 bg-[#1e1e1e] text-[7px] text-[#eee] ${taskbarFont}`}>
    <button aria-label="Start" className="flex w-[31px] items-center justify-center">
      <FaWindows className="size-[11px]" />
    </button>
    <input
      aria-label="Search the web and Windows"
      placeholder="Search the web and Windows"
      className="w-[220px] bg-[#353535] pl-[7px] text-[9px] outline-none placeholder:text-[#9c9c9c]"
    />
    <div className="flex w-[282px]">
      <TaskButton label="Task View"><TaskViewIcon /></TaskButton>
      <TaskButton label="Store">
        <svg viewBox="0 0 28 30" className="size-[15px]">
          <path d="M1 9l26-3v23L1 26z" fill="#f4f4f4" />
          <path d="M8 8V5q0-3 5-3t6 3v2" stroke="#f4f4f4" strokeWidth="1.600" fill="none" />
          <path d="M8 13l5-.5v5H8zM14 12.400l6-.6v5.700h-6zM8 18.500h5v5L8 23zM14 18.500h6v5.800l-6-.6z" fill="#222" />
        </svg>
      </TaskButton>
      <TaskButton label="Edge"><FaEdgeLegacy className="size-[14px] text-[#1b7fdc]" /></TaskButton>
      <TaskButton label="File Explorer" running><ExplorerIcon /></TaskButton>
      <TaskButton label="Chrome" running active><ChromeIcon className="size-[15px]" /></TaskButton>
      <TaskButton label="Power BI">
        <svg viewBox="0 0 30 30" className="size-[15px]">
          <path d="M0 0h30v30H0z" fill="#f2c811" />
          <rect x="5" y="7" width="20" height="15" rx="2" fill="none" stroke="#222" strokeWidth="2" />
          <path d="M11 25v-5M15 25v-8M19 25V13M23 25V11" stroke="#222" strokeWidth="2.500" />
        </svg>
      </TaskButton>
      <TaskButton label="Tools" running>
        <svg viewBox="0 0 30 30" className="size-[15px]">
          <rect x="6" y="6" width="18" height="17" fill="none" stroke="#4fae4a" strokeWidth="1.500" strokeDasharray="4 3" />
          <rect x="1" y="2" width="9" height="12" rx="2" fill="#e9b92c" />
          <path d="M14 14l13 14M27 14L13 28" stroke="#d4dce3" strokeWidth="3" />
          <path d="M12 15l5-4M23 12l5 5" stroke="#6fa3cc" strokeWidth="3" />
        </svg>
      </TaskButton>
      <TaskButton label="Photos" running>
        <svg viewBox="0 0 30 30" className="size-[15px]">
          <rect x="1" y="1" width="28" height="28" fill="#1a1a1a" stroke="#eee" strokeWidth="2" />
          <path d="M2 28V22l8-11 6 8 4-4 8 9v4z" fill="#fff" />
        </svg>
      </TaskButton>
      <TaskButton label="Snipping Tool" running>
        <svg viewBox="0 0 30 30" className="size-[15px]">
          <ellipse cx="12" cy="9" rx="10" ry="8" fill="#eceff1" stroke="#c0392b" strokeWidth="2" />
          <path d="M9 14l15 8M12 21l12-9" stroke="#aab4bd" strokeWidth="2" />
          <circle cx="24" cy="19" r="3" fill="none" stroke="#2f7fc4" strokeWidth="2" />
          <circle cx="18" cy="25" r="3" fill="none" stroke="#2f7fc4" strokeWidth="2" />
        </svg>
      </TaskButton>
    </div>
    <div className="mr-[2px] ml-auto flex items-center gap-[10px] border-r border-[#777] pr-[5px]">
      <ChevronUp className="size-[10px]" />
      <svg viewBox="0 0 20 12" className="h-[6px] w-[10px]" fill="none" stroke="#ddd" strokeWidth="1.600">
        <path d="M1 1h16v10H1zM18 4v4M4 4v4" />
      </svg>
      <SoundIcon />
      <svg viewBox="0 0 18 18" className="size-[9px]" fill="none" stroke="#ddd" strokeWidth="1.500">
        <path d="M2 17A15 15 0 0 1 17 2M6 17A11 11 0 0 1 17 6M10 17a7 7 0 0 1 7-7M14 17a3 3 0 0 1 3-3" />
      </svg>
      <NoteIcon />
      <svg viewBox="0 0 30 16" className="h-[8px] w-[15px]" fill="none" stroke="#ddd" strokeWidth="1.400">
        <path d="M1 1h28v14H1zM7 12h16" />
        <path d="M4 5h22M4 8h22" strokeDasharray="2 2" />
      </svg>
      <time className="w-[36px] text-right leading-[11px] whitespace-nowrap">5:02 PM<br />9/12/2019</time>
    </div>
  </div>
);

const App = () => (
  <div className="flex min-h-screen flex-col overflow-hidden bg-black">
    <div className={`text-[8px] ${chromeFont}`}>
      <div className="flex h-[22px] bg-[#dee1e6]">
        <Tab width="w-[158px]" icon={<VSphereIcon className="ml-[4px] size-[10px]" />} label="vSphere - sa-esxi-01 - Summary" />
        <Tab width="w-[153px]" icon={<GlobeIcon />} label="Shivangi" active />
        <Tab width="w-[152px]" label="New Tab" />
        <div className="my-auto mr-[9px] h-[12px] w-px bg-[#85888c]" />
        <button aria-label="New tab"><Plus className="size-[12px] text-[#333]" /></button>
        <WindowButtons className="gap-[21px] pr-[10px]" />
      </div>
      <AddressBar
        className="h-[22px] pr-[12px]"
        navClass="w-[69px] pl-[5px]"
        pillClass="h-5 pl-[8px] text-[9px]"
        host="nt-vcsa.talos.net.nz"
        path="/ui/webconsole.html?vmId=vm-3937&vmName=Shivangi&serverGuid=c2a06f59-ccb0-4ebf-bbd5-eb67077445e0&host=nt-vcsa.talos.net.nz&sessionTicket=cst-VCT-526dbeb6-d..."
        backColor="text-[#b4b6b9]"
        tools={
          <>
            <ZoomOut className="size-[10px] shrink-0 text-[#55585c]" />
            <Star className="ml-[5px] size-[10px] shrink-0 text-[#55585c]" />
          </>
        }
        avatar={
          <span className="flex size-[13px] items-center justify-center rounded-full bg-[#0e97ab] text-[7px] text-white">S</span>
        }
      />
      <Bookmarks />
    </div>
    <div className={`flex h-[46px] shrink-0 items-start px-[4px] pt-[4px] text-[8px] leading-[10px] ${clientFont}`}>
      <h1 className="flex-1 font-bold text-white">Shivangi</h1>
      <div className="flex gap-[3px] text-[#222]">
        {["Enforce US Keyboard Layout", "View Fullscreen", "Send Ctrl+Alt+Delete"].map((b) => (
          <button key={b} className="h-[12px] border border-[#999] bg-[#e2e2e2] px-[2px] leading-[10px]">{b}</button>
        ))}
      </div>
    </div>
    <div className={`text-[7px] ${chromeFont}`}>
      <div className="flex h-[20px] bg-[#dee1e6]">
        <Tab width="w-[139px]" icon={<KeyIcon />} label="Log in - VMware ESXi" divider />
        <Tab width="w-[139px]" icon={<KeyIcon />} label="Log in - VMware ESXi" divider />
        <Tab width="w-[138px]" label="New Tab" />
        <Tab width="w-[139px]" icon={<VSphereIcon />} label="vSphere Web Client" active />
        <button aria-label="New tab" className="ml-[8px]"><Plus className="size-[11px] text-[#333]" /></button>
        <WindowButtons className="gap-[18px] pr-[6px]" />
      </div>
      <AddressBar
        className="h-[21px] pr-[8px]"
        navClass="w-[57px]"
        pillClass="h-[18px] pl-[7px] text-[8px]"
        host="172.20.10.194"
        path="/vsphere-client/?csp#extensionId%3Dvsphere.core.host.manage.settings.virtualSwitchesView%3Bcontext%3Dcom.vmware.core.model%253A%253AServerObjectRef~2bd04a71-68ae-4134-9dc1-274658631627%25..."
        backColor="text-[#4a4d51]"
        tools={
          <>
            <svg viewBox="0 0 20 20" className="size-[10px] shrink-0">
              <path d="M1 5h5q-1-4 2-4t2 4h5v5q4-1 4 2t-4 2v4H1v-5q4 0 4-2.500T1 9z" fill="#4a4d51" />
              <rect x="11" y="11" width="9" height="9" rx="2" fill="#e04a3f" />
              <path d="M13 13l5 5M18 13l-5 5" stroke="#fff" strokeWidth="1.500" />
            </svg>
            <Star className="ml-[3px] size-[9px] shrink-0 text-[#55585c]" />
          </>
        }
        avatar={
          <svg viewBox="0 0 20 20" className="size-[11px]">
            <circle cx="10" cy="10" r="10" fill="#4a4d51" />
            <circle cx="10" cy="7" r="3.500" fill="#fff" />
            <path d="M4 15q6-6 12 0-6 4-12 0z" fill="#fff" />
          </svg>
        }
      />
    </div>
    <VSphereClient />
    <RemoteTaskbar />
    <HostTaskbar />
  </div>
);

export default App;
